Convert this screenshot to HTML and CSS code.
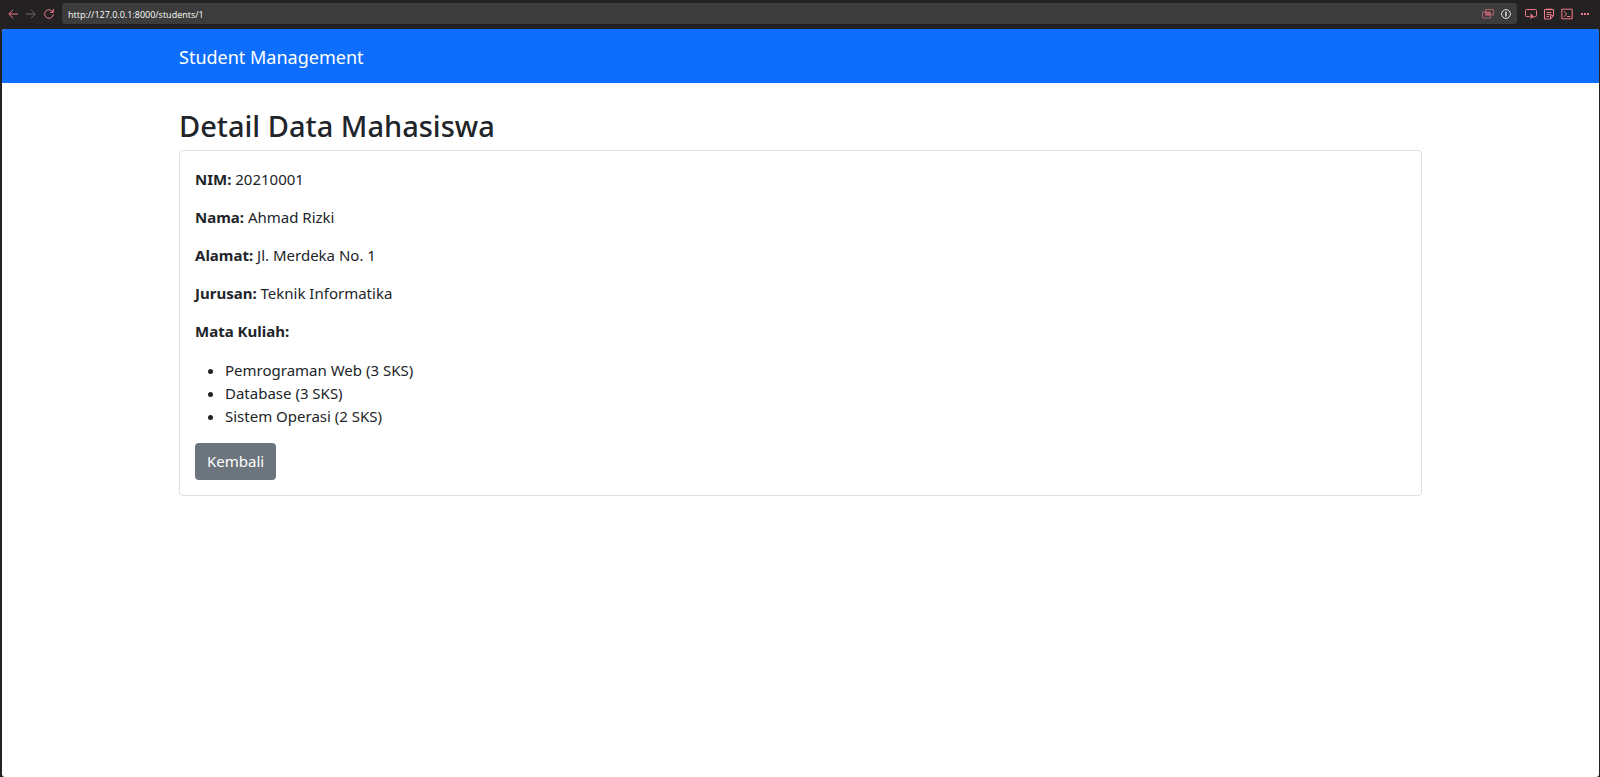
FILE: index.html
```html
<!DOCTYPE html>
<html lang="id">
<head>
  <meta charset="UTF-8">
  <meta name="viewport" content="width=device-width, initial-scale=1">
  <title>Student Management</title>
  <link rel="stylesheet" href="styles.css">
</head>
<body>
  <!-- Browser toolbar -->
  <header class="toolbar">
    <button class="tool" type="button" aria-label="Back">
      <svg viewBox="0 0 12 12"><path d="M11 6H2M6 1.8 1.8 6 6 10.2"/></svg>
    </button>
    <button class="tool tool-disabled" type="button" aria-label="Forward" disabled>
      <svg viewBox="0 0 12 12"><path d="M1 6h9M6 1.8 10.2 6 6 10.2"/></svg>
    </button>
    <button class="tool" type="button" aria-label="Reload">
      <svg viewBox="0 0 12 12"><path d="M10.3 6.2A4.3 4.3 0 1 1 8.6 2.6L10 4M10.3 1v3.3H7"/></svg>
    </button>
    <div class="address">
      <input class="url" type="text" aria-label="Address" value="http://127.0.0.1:8000/students/1">
      <button class="tool tool-dim" type="button" aria-label="Windows">
        <svg viewBox="0 0 12 12"><path d="M3.5 1.5h8v5.5h-8zM3.5 4h-3v6h8V7"/><path class="solid" d="M3.5 4h5v3h-5z"/></svg>
      </button>
      <button class="tool tool-light" type="button" aria-label="Site information">
        <svg viewBox="0 0 12 12"><circle cx="6" cy="6" r="4.4"/><path class="bold" d="M6 3.5v5"/></svg>
      </button>
    </div>
    <button class="tool" type="button" aria-label="Select element">
      <svg viewBox="0 0 12 12"><path d="M4.5 8.5H1.5a1 1 0 0 1-1-1v-5a1 1 0 0 1 1-1h9a1 1 0 0 1 1 1v5a1 1 0 0 1-1 1H9.5"/><path class="fill" d="M5.5 5.2v6l1.7-1.7h2.6z"/></svg>
    </button>
    <button class="tool" type="button" aria-label="Notes">
      <svg viewBox="0 0 12 12"><path d="M1.5 1.5h9v6.2L7.5 11h-6zM10.5 7.7h-3V11M3.5 4.5h5M3.5 6.5h5M3.5 8.5h2.5M4 .3v2M6 .3v2M8 .3v2"/></svg>
    </button>
    <button class="tool" type="button" aria-label="Console">
      <svg viewBox="0 0 12 12"><path d="M.8 1.2h10.4v9.6H.8zM3 3.3 5.6 6 3 8.7M6 8.5h3.4"/></svg>
    </button>
    <button class="tool" type="button" aria-label="More">
      <svg viewBox="0 0 12 12"><path class="dots" d="M2 6h2M5 6h2M8 6h2"/></svg>
    </button>
  </header>

  <div class="page">
    <nav class="navbar">
      <div class="container">
        <a class="navbar-brand" href="#">Student Management</a>
      </div>
    </nav>

    <main class="container content">
      <h2>Detail Data Mahasiswa</h2>
      <div class="card">
        <p><strong>NIM:</strong> 20210001</p>
        <p><strong>Nama:</strong> Ahmad Rizki</p>
        <p><strong>Alamat:</strong> Jl. Merdeka No. 1</p>
        <p><strong>Jurusan:</strong> Teknik Informatika</p>
        <p><strong>Mata Kuliah:</strong></p>
        <ul>
          <li>Pemrograman Web (3 SKS)</li>
          <li>Database (3 SKS)</li>
          <li>Sistem Operasi (2 SKS)</li>
        </ul>
        <a class="btn btn-secondary" href="#">Kembali</a>
      </div>
    </main>
  </div>
</body>
</html>
```

FILE: styles.css
```css
:root {
  --chrome: #232122;
  --field: #3c3c3c;
  --pink: #f0798a;
  --primary: #0d6efd;
  --secondary: #6c757d;
  --text: #212529;
  --border: #dfdfdf;
}

* {
  box-sizing: border-box;
}

body {
  margin: 0;
  min-height: 100vh;
  display: flex;
  flex-direction: column;
  background: var(--chrome);
  color: var(--text);
  font-family: "Segoe UI", "Noto Sans", sans-serif;
  font-size: 15px;
  line-height: 23px;
}

/* Toolbar */
.toolbar {
  display: flex;
  align-items: center;
  gap: 6px;
  height: 29px;
  padding: 0 9px 2px 7px;
}

.tool {
  flex: none;
  width: 12px;
  height: 12px;
  padding: 0;
  border: 0;
  background: none;
  color: var(--pink);
}

.tool svg {
  display: block;
  width: 12px;
  height: 12px;
  fill: none;
  stroke: currentColor;
  stroke-width: 1;
}

.tool .solid {
  fill: currentColor;
}

.tool .fill {
  fill: currentColor;
  stroke: none;
}

.tool .bold {
  stroke-width: 1.5;
}

.tool .dots {
  stroke-width: 2;
}

.tool-disabled {
  color: #6b696a;
}

.tool-dim {
  color: #b45f6c;
}

.tool-light {
  color: #e4e4e4;
}

.address {
  flex: 1;
  display: flex;
  align-items: center;
  gap: 6px;
  height: 21px;
  margin: 0 2px 0 1px;
  padding: 0 5px 0 6px;
  border-radius: 3px;
  background: var(--field);
}

.url {
  flex: 1;
  min-width: 0;
  padding: 1px 0 0;
  border: 0;
  outline: 0;
  background: none;
  color: #fff;
  font: 9px "Segoe UI", "Open Sans", "Noto Sans", sans-serif;
}

/* Page */
.page {
  flex: 1;
  margin: 0 1px 0 2px;
  border-radius: 3px;
  background: #fff;
  overflow: hidden;
}

.container {
  width: 100%;
  max-width: 1267px;
  margin: 0 auto;
  padding: 0 12px;
}

.navbar {
  padding: 14px 0 12px;
  background: var(--primary);
}

.navbar-brand {
  display: block;
  width: fit-content;
  color: #fff;
  font-size: 18px;
  line-height: 28px;
  text-decoration: none;
}

.content {
  padding-top: 24px;
}

h2 {
  margin: 0 0 6px;
  font-size: 29px;
  font-weight: 500;
  line-height: 37px;
}

.card {
  padding: 17px 15px 15px;
  border: 1px solid var(--border);
  border-radius: 4px;
}

.card p {
  margin: 0 0 15px;
}

.card ul {
  margin: 16px 0 15px;
  padding-left: 30px;
}

.btn {
  display: inline-block;
  padding: 7px 12px;
  border-radius: 4px;
  text-decoration: none;
}

.btn-secondary {
  background: var(--secondary);
  color: #fff;
}
```
